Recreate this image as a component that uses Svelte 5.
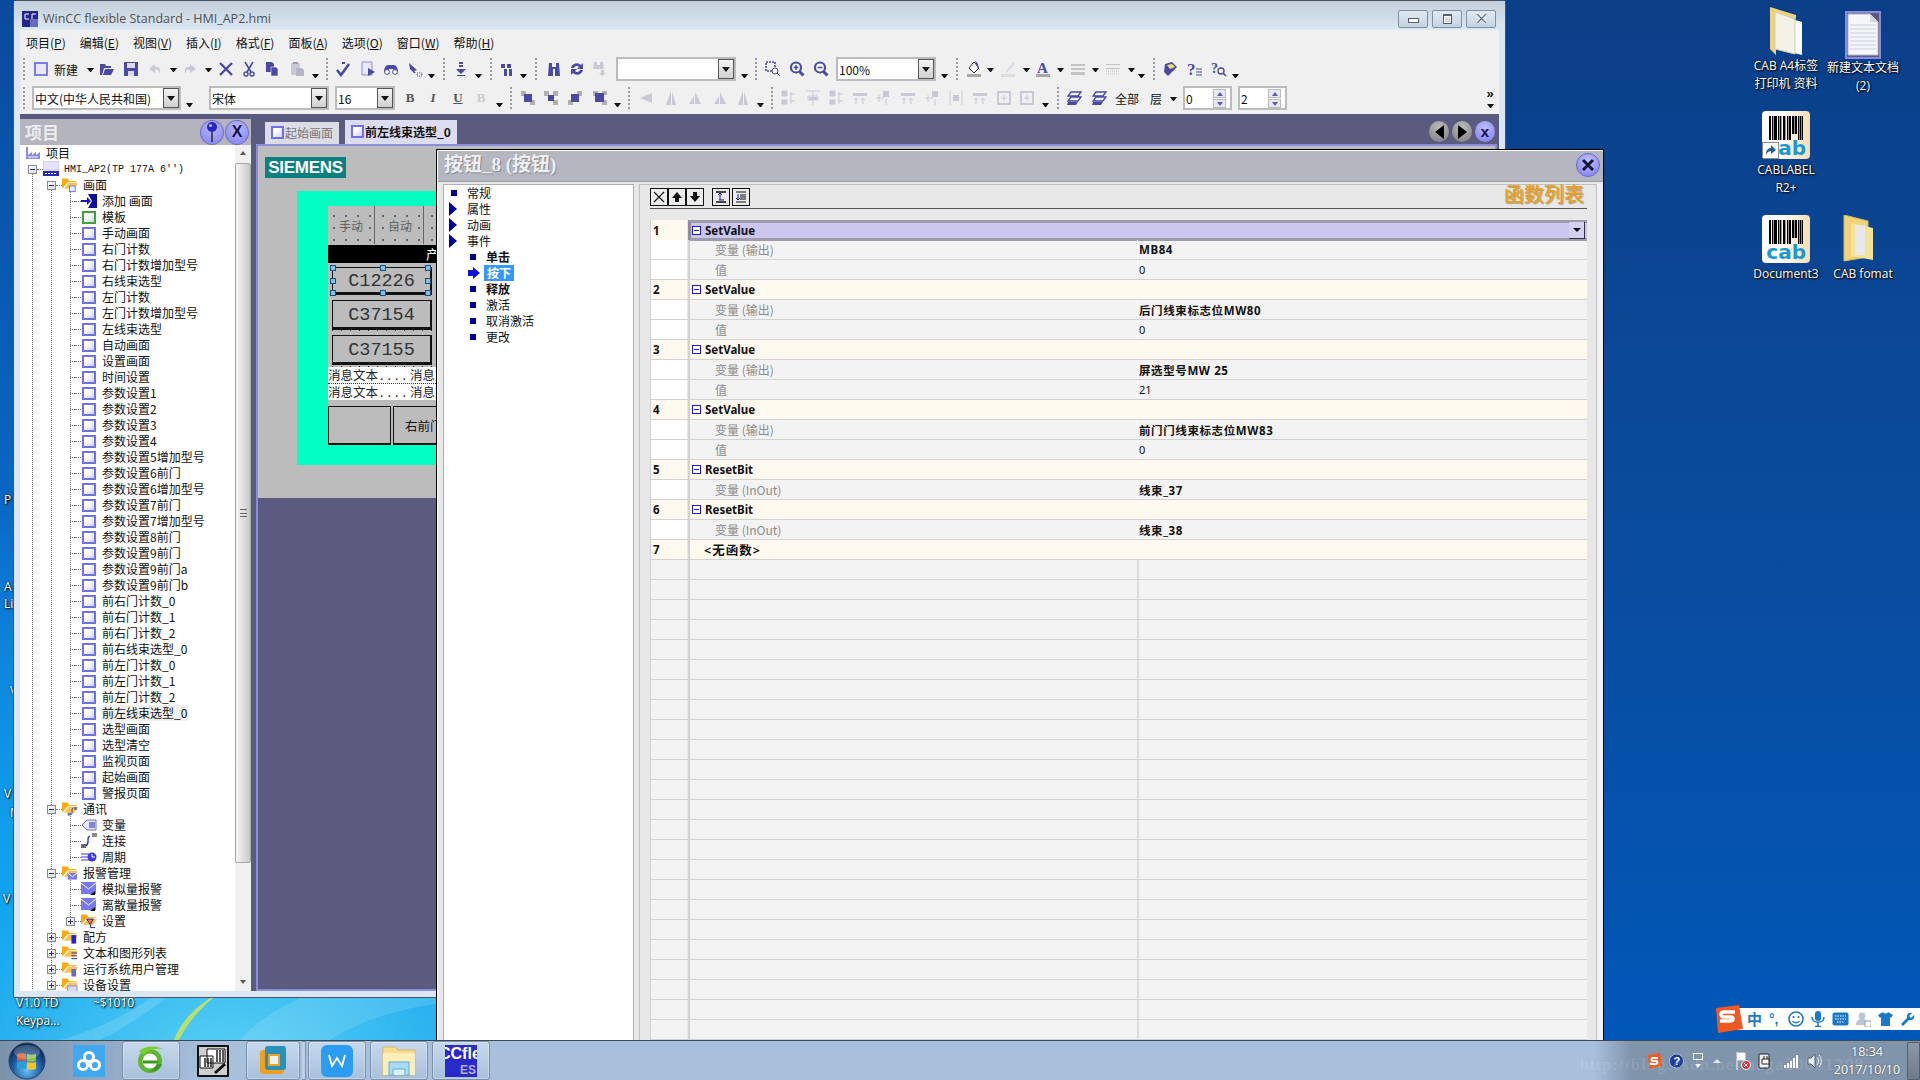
<script>
	const B = '#4a4aa6';
	const G = '#c9c9d6';
	const icons = {
		new: `<rect x="2" y="2" width="12" height="12" fill="#e8e8ff" stroke="#7c7cf0" stroke-width="2"/>`,
		open: `<path d="M1 14V3h5l1 2h5v2H5l-2 7zM4 14l2-6h9l-3 6z" fill="${B}"/>`,
		save: `<path d="M1 1h14v14H1z" fill="${B}"/><path d="M4 2h8v5H4z" fill="#dcdcf0"/><path d="M5 10h6v5H5z" fill="#dcdcf0"/>`,
		undo: `<path d="M12 13c3-4 0-8-4-7V3L2 8l6 4V9c3-1 5 1 4 4z" fill="${G}"/>`,
		redo: `<path d="M4 13C1 9 4 5 8 6V3l6 5-6 4V9c-3-1-5 1-4 4z" fill="${G}"/>`,
		del: `<path d="M2 2l12 12M14 2L2 14" stroke="${B}" stroke-width="2.4"/>`,
		cut: `<path d="M4 1l6 10M12 1L6 11" stroke="${B}" stroke-width="1.6"/><circle cx="5" cy="13" r="2" fill="none" stroke="${B}" stroke-width="1.4"/><circle cx="11" cy="13" r="2" fill="none" stroke="${B}" stroke-width="1.4"/>`,
		copy: `<path d="M2 1h6l2 2v8H2z" fill="${B}"/><path d="M7 6h5l2 2v7H7z" fill="${B}" stroke="#f0f0f0" stroke-width=".6"/>`,
		paste: `<path d="M2 2h9v12H2z" fill="${G}"/><path d="M7 7h6l2 2v6H7z" fill="#b4b4c6"/><path d="M4 1h5v2H4z" fill="#9c9cb0"/>`,
		check: `<path d="M2 9l4 5 8-11" fill="none" stroke="${B}" stroke-width="2.6"/><path d="M7 1h3v2H7z" fill="${B}"/>`,
		run: `<path d="M2 1h10v13H2z" fill="#e8e8f4" stroke="#8c8cc8"/><path d="M8 7l7 4-7 4z" fill="${B}"/>`,
		glasses: `<path d="M1 11c0-4 2-7 4-7h6c2 0 4 3 4 7h-5V8H6v3z" fill="${B}"/><circle cx="4" cy="11" r="2.4" fill="#fff" stroke="${B}"/><circle cx="12" cy="11" r="2.4" fill="#fff" stroke="${B}"/>`,
		xref: `<path d="M2 2l8 7-3 1 2 2H7L3 8z" fill="${B}"/><path d="M10 12h5v3h-5z" fill="none" stroke="${B}" stroke-dasharray="1 1"/>`,
		down: `<path d="M6 1h4v2H6zM6 4h4v2H6zM3 8h10l-5 5zM4 14h8v1H4z" fill="${B}"/>`,
		stack: `<path d="M1 3h4v4H1zM7 3h4v4H7zM4 8h3v7H4zM9 8h3v7H9z" fill="${B}"/>`,
		bino: `<path d="M3 2h3v4h4V2h3l1 13H9V8H7v7H2z" fill="${B}"/>`,
		replace: `<path d="M2 7a6 6 0 0 1 10-3l2-2v6H8l2-2a3 3 0 0 0-5 1zM14 9a6 6 0 0 1-10 3l-2 2V8h6l-2 2a3 3 0 0 0 5-1z" fill="${B}"/>`,
		findd: `<path d="M2 1h3v3h3V1h3l1 7H1zM9 9v3H7l3 3 4-3h-2V9z" fill="${G}"/>`,
		zrect: `<path d="M1 1h9v9H1z" fill="none" stroke="${B}" stroke-dasharray="2 1" stroke-width="1.6"/><circle cx="10" cy="10" r="3" fill="#fff" stroke="${B}"/><path d="M12 12l3 3" stroke="${B}"/>`,
		zin: `<circle cx="7" cy="6.5" r="5" fill="#fff" stroke="${B}" stroke-width="2.2"/><path d="M4.5 6.5h5M7 4v5" stroke="${B}" stroke-width="1.6"/><path d="M10.5 10.5l4 4" stroke="${B}" stroke-width="3"/>`,
		zout: `<circle cx="7" cy="6.5" r="5" fill="#fff" stroke="${B}" stroke-width="2.2"/><path d="M4.5 6.5h5" stroke="${B}" stroke-width="1.6"/><path d="M10.5 10.5l4 4" stroke="${B}" stroke-width="3"/>`,
		fill: `<path d="M8 1l5 6-5 5-5-5z" fill="#fff" stroke="#333"/><path d="M9 0c3 1 4 5 3 8-1-2-2-5-3-8z" fill="${B}"/><path d="M1 13h14v3H1z" fill="#a8a8a8"/>`,
		pen: `<path d="M13 1L7 9l-2 3 3-1 7-8z" fill="#dcdce6"/><path d="M1 13h14v3H1z" fill="#dcdcdc"/>`,
		fontA: `<text x="2" y="12" font-family="Liberation Serif,serif" font-size="15" font-weight="bold" fill="${B}">A</text><path d="M1 13h14v3H1z" fill="#a8a8a8"/>`,
		lines: `<path d="M1 3h14v2H1zM1 7h14v2H1zM1 11h14v3H1z" fill="#c4c4c4"/>`,
		dash: `<path d="M1 3h14v1H1zM1 7h14v1H1z" fill="#c4c4c4"/><path d="M1 10h14M1 13h14" stroke="#c4c4c4" stroke-dasharray="1 1"/>`,
		book: `<path d="M3 3l7-2 5 5-9 9-4-4z" fill="${B}"/><path d="M5 4l5-1 3 3-5 2z" fill="#ece078"/>`,
		help: `<text x="0" y="14" font-family="Liberation Serif,serif" font-size="17" font-weight="bold" fill="${B}">?</text><path d="M9 8h6M9 11h6M9 14h6" stroke="${B}"/>`,
		helpz: `<text x="0" y="12" font-family="Liberation Serif,serif" font-size="14" font-weight="bold" fill="${B}">?</text><circle cx="10" cy="10" r="3" fill="#fff" stroke="${B}" stroke-width="1.4"/><path d="M12 12l3 3" stroke="${B}" stroke-width="1.6"/>`,
		o1: `<path d="M1 1h5v5H1zM10 10h5v5h-5z" fill="#b0b0b0"/><path d="M4 4h8v8H4z" fill="${B}"/>`,
		o2: `<path d="M1 1h5v5H1zM10 10h5v5h-5zM10 1h5v5h-5z" fill="#b0b0b0"/><path d="M5 5h6v6H5z" fill="${B}"/>`,
		o3: `<path d="M10 1h5v5h-5zM1 10h5v5H1z" fill="#b0b0b0"/><path d="M4 4h8v8H4z" fill="${B}"/>`,
		o4: `<path d="M10 10h5v5h-5zM1 1h5v5H1zM10 1h5v4h-5z" fill="#b0b0b0"/><path d="M3 3h9v9H3z" fill="${B}"/>`,
		f1: `<path d="M14 3v10L2 8z" fill="${G}"/>`,
		f2: `<path d="M8 1v14H3zM9 1l4 14H9z" fill="${G}"/>`,
		f3: `<path d="M8 2l6 12H8zM7 6L2 14h5z" fill="${G}"/>`,
		a1: `<path d="M2 1h5v5H2zM2 10h5v4H2zM11 2v12" stroke="${G}" fill="${G}"/><path d="M10 4h5M10 11h5" stroke="${G}"/>`,
		a2: `<path d="M1 1h14M8 1v14M3 6h10v4H3z" stroke="${G}" fill="none"/><path d="M4 7h8v3H4z" fill="${G}"/>`,
		a3: `<path d="M1 3h14v3H1z" fill="${G}"/><path d="M4 8v6M11 8v6M2 10l2-2 2 2M9 10l2-2 2 2" stroke="${G}" fill="none"/>`,
		a4: `<path d="M8 1h6v6H8z" fill="${G}"/><path d="M1 8h8M4 5v7M11 9v6" stroke="${G}" fill="none"/>`,
		a5: `<path d="M2 1v14M14 1v14" stroke="${G}"/><path d="M5 5h6v6H5z" fill="${G}"/>`,
		a6: `<rect x="2" y="2" width="12" height="12" fill="none" stroke="${G}" stroke-width="2"/><path d="M5 8h6M8 5v6" stroke="${G}"/>`,
		l1: `<path d="M5 2h10l-3 4H2zM5 7h10l-3 4H2z" fill="none" stroke="${B}" stroke-width="1.3"/><path d="M2 12h10l-2 3H1z" fill="${B}"/>`
	};

	// toolbar entries carry the x they have on screen; margins follow from it
	function place(items, w) {
		let end = 20;
		return items.map((it) => {
			const width = w(it);
			const m = it.x - end;
			end = it.x + width;
			return { ...it, m, width };
		});
	}
	const widthOf = (it) => it.w ?? (it.k === 'grip' ? 4 : it.k === 'arr' || it.k === 'more' ? 7 : 16);
	const ic = (x, i) => ({ k: 'icon', x, i });
	const bar1 = place([
		{ k: 'grip', x: 23 }, ic(33, 'new'), { k: 'label', x: 54, w: 24, t: '新建' }, { k: 'arr', x: 87 }, ic(99, 'open'), ic(123, 'save'),
		ic(147, 'undo'), { k: 'arr', x: 170 }, ic(182, 'redo'), { k: 'arr', x: 205 }, ic(218, 'del'), ic(241, 'cut'), ic(264, 'copy'), ic(289, 'paste'),
		{ k: 'more', x: 312 }, { k: 'grip', x: 326 }, ic(335, 'check'), ic(360, 'run'), ic(383, 'glasses'), ic(407, 'xref'), { k: 'more', x: 428 },
		{ k: 'grip', x: 443 }, ic(453, 'down'), { k: 'more', x: 475 }, { k: 'grip', x: 490 }, ic(500, 'stack'), { k: 'more', x: 520 }, { k: 'grip', x: 535 },
		ic(546, 'bino'), ic(569, 'replace'), ic(592, 'findd'), { k: 'combo', x: 616, w: 120, t: '' }, { k: 'more', x: 741 }, { k: 'grip', x: 755 },
		ic(765, 'zrect'), ic(789, 'zin'), ic(813, 'zout'), { k: 'combo', x: 836, w: 100, t: '100%' }, { k: 'more', x: 941 }, { k: 'grip', x: 956 },
		ic(966, 'fill'), { k: 'arr', x: 987 }, ic(1000, 'pen'), { k: 'arr', x: 1023 }, ic(1035, 'fontA'), { k: 'arr', x: 1057 }, ic(1070, 'lines'), { k: 'arr', x: 1092 },
		ic(1105, 'dash'), { k: 'arr', x: 1128 }, { k: 'more', x: 1138 }, { k: 'grip', x: 1153 }, ic(1162, 'book'), ic(1187, 'help'), ic(1211, 'helpz'), { k: 'more', x: 1232 }
	], widthOf);
	const bar2 = place([
		{ k: 'grip', x: 23 }, { k: 'combo', x: 32, w: 149, t: '中文(中华人民共和国)' }, { k: 'more', x: 186 },
		{ k: 'combo', x: 209, w: 120, t: '宋体' }, { k: 'combo', x: 335, w: 60, t: '16' },
		{ k: 'fmt', x: 402, w: 16, t: 'B', c: 'b' }, { k: 'fmt', x: 425, w: 16, t: 'I', c: 'i' }, { k: 'fmt', x: 450, w: 16, t: 'U', c: 'u' }, { k: 'fmt', x: 473, w: 16, t: 'B', c: 'b off' }, { k: 'more', x: 496 },
		{ k: 'grip', x: 510 }, ic(520, 'o1'), ic(543, 'o2'), ic(567, 'o3'), ic(592, 'o4'), { k: 'more', x: 614 }, { k: 'grip', x: 628 },
		ic(638, 'f1'), ic(663, 'f2'), ic(687, 'f3'), ic(712, 'f3'), ic(735, 'f2'), { k: 'more', x: 757 }, { k: 'grip', x: 771 },
		ic(780, 'a1'), ic(805, 'a2'), ic(828, 'a1'), ic(852, 'a3'), ic(875, 'a4'), ic(900, 'a3'), ic(924, 'a4'), ic(948, 'a5'), ic(972, 'a3'), ic(996, 'a6'), ic(1019, 'a6'),
		{ k: 'more', x: 1042 }, { k: 'grip', x: 1057 }, ic(1066, 'l1'), ic(1091, 'l1'), { k: 'label', x: 1115, w: 24, t: '全部' }, { k: 'label', x: 1150, w: 12, t: '层' },
		{ k: 'arr', x: 1170 }, { k: 'spin', x: 1183, w: 49, t: '0' }, { k: 'spin', x: 1238, w: 49, t: '2' }, { k: 'chev', x: 1485, w: 10 }
	], widthOf);

	const menu = [['项目', 'P'], ['编辑', 'E'], ['视图', 'V'], ['插入', 'I'], ['格式', 'F'], ['面板', 'A'], ['选项', 'O'], ['窗口', 'W'], ['帮助', 'H']];

	const scr = (t) => ({ t, l: 3, i: 'screen' });
	const tree = [
		{ t: '项目', l: 0, i: 'factory' },
		{ t: "HMI_AP2(TP 177A 6'')", l: 1, i: 'hmi', ex: '-', mono: true },
		{ t: '画面', l: 2, i: 'folder', ex: '-', sub: 'scr' },
		{ t: '添加 画面', l: 3, i: 'add' },
		{ t: '模板', l: 3, i: 'tpl' },
		...['手动画面', '右门计数', '右门计数增加型号', '右线束选型', '左门计数', '左门计数增加型号', '左线束选型', '自动画面', '设置画面', '时间设置',
			'参数设置1', '参数设置2', '参数设置3', '参数设置4', '参数设置5增加型号', '参数设置6前门', '参数设置6增加型号', '参数设置7前门', '参数设置7增加型号',
			'参数设置8前门', '参数设置9前门', '参数设置9前门a', '参数设置9前门b', '前右门计数_0', '前右门计数_1', '前右门计数_2', '前右线束选型_0',
			'前左门计数_0', '前左门计数_1', '前左门计数_2'].map(scr),
		{ ...scr('前左线束选型_0'), sel: true },
		...['选型画面', '选型清空', '监视页面', '起始画面', '警报页面'].map(scr),
		{ t: '通讯', l: 2, i: 'folder', ex: '-', sub: 'link' },
		{ t: '变量', l: 3, i: 'tag' },
		{ t: '连接', l: 3, i: 'link' },
		{ t: '周期', l: 3, i: 'cycle' },
		{ t: '报警管理', l: 2, i: 'folder', ex: '-', sub: 'mail' },
		{ t: '模拟量报警', l: 3, i: 'mail' },
		{ t: '离散量报警', l: 3, i: 'mail' },
		{ t: '设置', l: 3, i: 'folder', ex: '+', sub: 'set' },
		{ t: '配方', l: 2, i: 'folder', ex: '+', sub: 'rec' },
		{ t: '文本和图形列表', l: 2, i: 'folder', ex: '+', sub: 'list' },
		{ t: '运行系统用户管理', l: 2, i: 'folder', ex: '+', sub: 'user' },
		{ t: '设备设置', l: 2, i: 'folder', ex: '+', sub: 'dev' }
	];
	const guides = [
		{ x: 11, a: 1, b: 52 }, { x: 30, a: 2, b: 52 }, { x: 49, a: 2, b: 40 }, { x: 49, a: 41, b: 44 }, { x: 49, a: 45, b: 48 }
	];

	const events = [
		{ t: '常规', l: 0, m: 'sq' }, { t: '属性', l: 0, m: 'tri' }, { t: '动画', l: 0, m: 'tri' }, { t: '事件', l: 0, m: 'tri' },
		{ t: '单击', l: 1, m: 'sq', b: true }, { t: '按下', l: 1, m: 'arrow', b: true, on: true }, { t: '释放', l: 1, m: 'sq', b: true },
		{ t: '激活', l: 1, m: 'sq' }, { t: '取消激活', l: 1, m: 'sq' }, { t: '更改', l: 1, m: 'sq' }
	];

	const fns = [
		{ n: 1, f: 'SetValue', sel: true, sub: [['变量 (输出)', 'MB84', 1], ['值', '0']] },
		{ n: 2, f: 'SetValue', sub: [['变量 (输出)', '后门线束标志位MW80', 1], ['值', '0']] },
		{ n: 3, f: 'SetValue', sub: [['变量 (输出)', '屏选型号MW 25', 1], ['值', '21']] },
		{ n: 4, f: 'SetValue', sub: [['变量 (输出)', '前门门线束标志位MW83', 1], ['值', '0']] },
		{ n: 5, f: 'ResetBit', sub: [['变量 (InOut)', '线束_37', 1]] },
		{ n: 6, f: 'ResetBit', sub: [['变量 (InOut)', '线束_38', 1]] }
	];
	const blanks = Array.from({ length: 24 }, (_, i) => i);
	const codes = [{ c: 'C12226', sel: true }, { c: 'C37154' }, { c: 'C37155' }];
	const bars = [0, 3, 5, 6, 9, 11, 14, 15, 18, 20, 23, 24, 26, 29, 31, 33];
</script>

{#snippet svg(name, w = 16)}
	<svg width={w} height={w} viewBox="0 0 16 16">{@html icons[name]}</svg>
{/snippet}

{#snippet folderIcon(sub)}
	<svg width="17" height="16" viewBox="0 0 17 16">
		<path d="M0 1h6l2 3h8l-1 1H6L1 11H0z" fill="#fca90f" />
		<path d="M2 12l5-6h10l-4 6z" fill="#fdc24a" />
		{#if sub === 'scr'}<rect x="8" y="9" width="6" height="6" fill="#eef" stroke="#6c6cf0" />{/if}
		{#if sub === 'link'}<path d="M12 7c-3 1 0 4-2 7" fill="none" stroke="#1a1ae0" /><rect x="13" y="6" width="3" height="3" fill="#5a7a90" /><rect x="6" y="12" width="3" height="3" fill="#5a7a90" />{/if}
		{#if sub === 'mail'}<rect x="6" y="8" width="10" height="7" fill="#7a7af0" /><path d="M6 8l5 4 5-4" fill="none" stroke="#fff" />{/if}
		{#if sub === 'set'}<path d="M6 6h7l-3 6z" fill="#f08010" stroke="#2020a0" /><path d="M10 12v3h5" fill="none" stroke="#2020a0" />{/if}
		{#if sub === 'rec'}<rect x="10" y="6" width="5" height="9" fill="#2020e0" />{/if}
		{#if sub === 'list'}<path d="M10 8h6M10 11h6M10 14h6" stroke="#2020a0" />{/if}
		{#if sub === 'user'}<circle cx="12" cy="6" r="2" fill="#e8c090" /><rect x="10" y="8" width="5" height="8" fill="#6a6ac0" />{/if}
		{#if sub === 'dev'}<rect x="6" y="9" width="10" height="7" fill="#d8d8f8" stroke="#8888e0" />{/if}
	</svg>
{/snippet}

{#snippet treeIcon(r)}
	{#if r.i === 'screen'}<span class="scr"></span>
	{:else if r.i === 'tpl'}<span class="scr tpl"></span>
	{:else if r.i === 'folder'}{@render folderIcon(r.sub)}
	{:else if r.i === 'factory'}
		<svg width="16" height="14" viewBox="0 0 16 14"><path d="M1 1v12h14V6l-4 3V6L7 9V6L3 9V1z" fill="#8a8af0" /><path d="M3 11h10" stroke="#fff" /></svg>
	{:else if r.i === 'hmi'}
		<svg width="16" height="16" viewBox="0 0 16 16"><rect y="0" width="16" height="9" fill="#e4e4fa" stroke="#c0c0f0" /><rect y="10" width="16" height="5" fill="#2828b8" /><path d="M2 12.5h12" stroke="#fff" stroke-dasharray="2 1" /></svg>
	{:else if r.i === 'add'}
		<svg width="16" height="14" viewBox="0 0 16 14"><path d="M7 0h9v14H7l4-7z" fill="#0c0ca0" /><path d="M0 6h6V3l4 4-4 4V8H0z" fill="#1414d0" /></svg>
	{:else if r.i === 'tag'}
		<svg width="16" height="12" viewBox="0 0 16 12"><path d="M1 6l5-5h9v10H6z" fill="#e8e8fa" stroke="#6a6ae0" /><path d="M8 4h6M8 6h6M8 8h6" stroke="#2020b0" /></svg>
	{:else if r.i === 'link'}
		<svg width="16" height="16" viewBox="0 0 16 16"><path d="M9 3C4 5 10 9 5 13" fill="none" stroke="#1a1ae0" stroke-width="1.2" /><rect x="11" y="0" width="5" height="4" fill="#8a8a8a" /><rect x="0" y="11" width="5" height="4" fill="#6a6a6a" /></svg>
	{:else if r.i === 'cycle'}
		<svg width="16" height="10" viewBox="0 0 16 10"><path d="M0 2h8M0 5h8M0 8h8" stroke="#3a3ae0" /><circle cx="11" cy="5" r="4.5" fill="#3a3ae0" /><path d="M11 2v3h3" fill="none" stroke="#fff" /></svg>
	{:else if r.i === 'mail'}
		<svg width="16" height="14" viewBox="0 0 16 14"><rect width="15" height="12" fill="#7878ee" /><path d="M0 1l7.5 6L15 1" fill="none" stroke="#fff" /><path d="M9 13l5-4v4z" fill="#111" /></svg>
	{/if}
{/snippet}

{#snippet minus()}
	<svg class="fx" width="9" height="9" viewBox="0 0 9 9"><rect x=".5" y=".5" width="8" height="8" fill="#fff" stroke="#1818e0" /><path d="M2 4.5h5" stroke="#1818e0" /></svg>
{/snippet}

{#snippet cabIcon(word, shortcut)}
	<div class="cab">
		<svg class="cabbars" width="34" height="26" viewBox="0 0 34 26">
			{#each bars as b, i}<rect x={b} y="0" width={i % 3 === 0 ? 2 : 1.4} height={i > 9 && i < 13 ? 18 : 24} />{/each}
		</svg>
		<span class="cabword">{word}</span>
		{#if shortcut}
			<span class="shortcut">
				<svg width="14" height="14" viewBox="0 0 14 14"><path d="M3 12c0-5 2-7 5-7V2l5 5-5 4V8c-2 0-4 1-5 4z" fill="#1a5ea8" /></svg>
			</span>
		{/if}
	</div>
{/snippet}

<div class="desktop">
	<!-- half-hidden desktop labels behind the window -->
	<span class="peek" style="left:4px;top:491px">P</span>
	<span class="peek" style="left:4px;top:578px">A</span>
	<span class="peek" style="left:4px;top:595px">Li</span>
	<span class="peek" style="left:10px;top:682px">V</span>
	<span class="peek" style="left:4px;top:785px">V</span>
	<span class="peek" style="left:10px;top:804px">M</span>
	<span class="peek" style="left:3px;top:890px">V</span>
	<span class="peek" style="left:16px;top:994px">V1.0 TD</span>
	<span class="peek" style="left:93px;top:994px">~$1010</span>
	<span class="peek" style="left:16px;top:1012px">Keypa...</span>

	<svg class="swoosh" width="436" height="42" viewBox="0 0 436 42">
		<path d="M210 0c-20 14-30 26-36 42h5c8-16 18-28 34-42z" fill="#b8e070" />
		<path d="M150 0C130 16 90 34 60 42h40c20-10 50-28 65-42z" fill="#fff" opacity=".14" />
		<path d="M300 0c-30 14-50 30-60 42h90c20-14 60-30 106-36V0z" fill="#fff" opacity=".12" />
	</svg>

	<div class="dicon" style="left:1752px;top:0">
		<svg class="tall" width="36" height="50" viewBox="0 0 36 50"><path d="M2 0l26 8v4L8 6v42L2 42z" fill="#efd27a" /><path d="M10 8l24 7v33L10 42z" fill="#fff" /><path d="M7 5l20 7v35L7 42z" fill="#f4f1e6" stroke="#d8cfa8" /></svg>
		<div class="dlabel">CAB A4标签<br />打印机 资料</div>
	</div>
	<div class="dicon" style="left:1829px;top:0">
		<svg class="doc" width="32" height="44" viewBox="0 0 32 44"><path d="M1 1h22l8 8v33H1z" fill="#f4f6fa" stroke="#b8bcc6" /><path d="M3 12h26M3 16h26M3 20h26M3 24h26M3 28h26M3 32h26M3 36h26" stroke="#c8d0e0" /><path d="M23 1v8h8z" fill="#d4d8e0" /></svg>
		<div class="dlabel">新建文本文档<br />(2)</div>
	</div>
	<div class="dicon" style="left:1752px;top:111px">
		{@render cabIcon('ab', true)}
		<div class="dlabel gap3">CABLABEL<br />R2+</div>
	</div>
	<div class="dicon" style="left:1752px;top:215px">
		{@render cabIcon('cab', false)}
		<div class="dlabel gap3">Document3</div>
	</div>
	<div class="dicon" style="left:1829px;top:215px">
		<svg class="fomat" width="32" height="48" viewBox="0 0 32 48"><path d="M1 0l24 6v36L1 46z" fill="#efd27a" stroke="#d8b858" /><path d="M8 8l22 5v32L8 41z" fill="#f2e29c" /><path d="M12 10h10v30H12z" fill="#e8e8e8" /></svg>
		<div class="dlabel gap3">CAB fomat</div>
	</div>

	<div class="window">
		<header class="titlebar">
			<svg class="appicon" width="16" height="16" viewBox="0 0 16 16"><rect width="16" height="16" fill="#23238c" /><rect x="8" y="8" width="8" height="8" fill="#6a6ac0" /><path d="M3 3h4M3 3v5M3 8h4M10 3h4M10 3v5" stroke="#fff" fill="none" /></svg>
			<span class="apptitle">WinCC flexible Standard - HMI_AP2.hmi</span>
			<div class="winbtns">
				<span class="wb"><i class="w-min"></i></span>
				<span class="wb"><i class="w-max"></i></span>
				<span class="wb">
					<svg width="13" height="11" viewBox="0 0 13 11"><path d="M2 1l9 9M11 1l-9 9" stroke="#fff" stroke-width="3" /><path d="M2 1l9 9M11 1l-9 9" stroke="#64748a" stroke-width="1.4" /></svg>
				</span>
			</div>
		</header>

		<nav class="menubar">
			{#each menu as [a, k]}<span class="mi">{a}(<u>{k}</u>)</span>{/each}
		</nav>

		{#each [bar1, bar2] as bar, bi}
			<div class="toolbar" class:second={bi === 1}>
				{#each bar as it}
					{#if it.k === 'grip'}<span class="grip" style="margin-left:{it.m}px"></span>
					{:else if it.k === 'arr'}<span class="arr" style="margin-left:{it.m}px"></span>
					{:else if it.k === 'more'}<span class="arr more" style="margin-left:{it.m}px"></span>
					{:else if it.k === 'icon'}<span class="tic" style="margin-left:{it.m}px">{@render svg(it.i)}</span>
					{:else if it.k === 'label'}<span class="tlabel" style="margin-left:{it.m}px;width:{it.width}px">{it.t}</span>
					{:else if it.k === 'fmt'}<span class="fmt {it.c}" style="margin-left:{it.m}px">{it.t}</span>
					{:else if it.k === 'combo'}
						<span class="combo" style="margin-left:{it.m}px;width:{it.width}px"><span class="ctext">{it.t}</span><span class="cbtn"><i></i></span></span>
					{:else if it.k === 'spin'}
						<span class="spin" style="margin-left:{it.m}px;width:{it.width}px"><span class="ctext">{it.t}</span><span class="spbtns"><i class="up"></i><i class="dn"></i></span></span>
					{:else if it.k === 'chev'}
						<span class="chev" style="margin-left:{it.m}px">»<span class="arr"></span></span>
					{/if}
				{/each}
			</div>
		{/each}

		<div class="workspace">
			<aside class="project">
				<div class="panehead">
					<span>项目</span>
					<span class="pbtn"><svg width="12" height="22" viewBox="0 0 12 22"><circle cx="6" cy="6" r="5" fill="#2424c8" /><circle cx="4.5" cy="4.5" r="1.6" fill="#b8b8ff" /><path d="M6 11v10" stroke="#222" stroke-width="1.4" /></svg></span>
					<span class="pbtn x"><b>X</b></span>
				</div>
				<div class="panebody">
					<div class="tree">
						{#each guides as g}
							<i class="vline" style="left:{g.x}px;top:{g.a * 16 + 12}px;height:{(g.b - g.a) * 16}px"></i>
						{/each}
						{#each tree as r}
							<div class="row" style="padding-left:{r.l === 0 ? 4 : 19 * r.l - 12}px">
								{#if r.l > 0}
									{#if r.ex}
										<span class="exp">{#if r.ex === '-'}<i class="h"></i>{:else}<i class="h"></i><i class="v"></i>{/if}</span>
									{:else}
										<span class="noexp"></span>
									{/if}
									<span class="stub"></span>
								{/if}
								<span class="ri">{@render treeIcon(r)}</span>
								<span class="rt" class:mono={r.mono} class:sel={r.sel}>{r.t}</span>
							</div>
						{/each}
					</div>
					<div class="vscroll">
						<i class="sup"></i>
						<div class="thumb"><span></span></div>
						<i class="sdn"></i>
					</div>
				</div>
			</aside>

			<section class="editor">
				<div class="tabs">
					<span class="tab"><i class="scr small"></i>起始画面</span>
					<span class="tab active"><i class="scr small"></i>前左线束选型_0</span>
					<div class="navbtns">
						<span class="nav"><i class="tl"></i></span>
						<span class="nav"><i class="tr"></i></span>
						<span class="nav close"><b>x</b></span>
					</div>
				</div>
				<div class="doc">
					<div class="canvas">
						<div class="siemens">SIEMENS</div>
						<div class="screen">
							<div class="hmi">
								<div class="hrow">
									<span class="hbtn">手动</span>
									<span class="hbtn">自动</span>
									<span class="hbtn"></span>
								</div>
								<div class="hblack"><span>产</span></div>
								<div class="codes">
									{#each codes as c}
										<div class="code" class:picked={c.sel}>
											{c.c}
											{#if c.sel}
												<i class="hd" style="left:-3px;top:-3px"></i><i class="hd" style="left:47px;top:-3px"></i><i class="hd" style="left:92px;top:-3px"></i>
												<i class="hd" style="left:-3px;top:10px"></i><i class="hd" style="left:92px;top:10px"></i>
												<i class="hd" style="left:-3px;top:22px"></i><i class="hd" style="left:47px;top:22px"></i><i class="hd" style="left:92px;top:22px"></i>
											{/if}
										</div>
									{/each}
								</div>
								<div class="msg">消息文本<span class="dots">....</span>消息文本</div>
								<div class="msg last">消息文本<span class="dots">....</span>消息文本</div>
								<div class="hbottom">
									<span class="bbtn"></span>
									<span class="bbtn long">右前门</span>
								</div>
							</div>
						</div>
					</div>
				</div>
			</section>
		</div>
	</div>

	<div class="dialog">
		<div class="dhead">
			<span class="dtitle">按钮_8 (按钮)</span>
			<span class="dclose">
				<svg width="14" height="14" viewBox="0 0 14 14"><path d="M2 2l10 10M12 2L2 12" stroke="#14143c" stroke-width="3" /></svg>
			</span>
		</div>
		<div class="dbody">
			<div class="evtree">
				{#each events as e}
					<div class="ev" class:lvl1={e.l === 1}>
						<span class="mark">
							{#if e.m === 'sq'}<i class="sq"></i>
							{:else if e.m === 'tri'}<i class="tri"></i>
							{:else}<svg width="12" height="12" viewBox="0 0 12 12"><path d="M0 3h5V0l7 6-7 6V9H0z" fill="#1010e0" /></svg>{/if}
						</span>
						<span class="evt" class:bold={e.b} class:on={e.on}>{e.t}</span>
					</div>
				{/each}
			</div>
			<div class="fnpanel">
				<div class="fnbar">
					<div class="fngroup">
						<span class="fb"><svg width="14" height="14" viewBox="0 0 14 14"><path d="M2 2l10 10M12 2L2 12" stroke="#111" stroke-width="1.2" /></svg></span>
						<span class="fb"><svg width="14" height="14" viewBox="0 0 14 14"><path d="M7 2l5 6H9v4H5V8H2z" fill="#111" /></svg></span>
						<span class="fb"><svg width="14" height="14" viewBox="0 0 14 14"><path d="M7 12L2 6h3V2h4v4h3z" fill="#111" /></svg></span>
					</div>
					<div class="fngroup two">
						<span class="fb"><svg width="14" height="14" viewBox="0 0 14 14"><path d="M2 2h10M2 12h10" stroke="#111" stroke-width="1.6" /><path d="M6 3v7M4 5l2-2 2 2M5 10h5" stroke="#1414a0" fill="none" /></svg></span>
						<span class="fb"><svg width="14" height="14" viewBox="0 0 14 14"><path d="M2 2h10M6 5h6M6 7h6M6 9h6M2 12h10" stroke="#111" stroke-width="1.2" /><path d="M4 4v6M2 8l2 2 2-2" stroke="#1414a0" fill="none" /></svg></span>
					</div>
					<span class="fntitle">函数列表</span>
				</div>
				<div class="fntable">
					{#each fns as f}
						<div class="trow head" class:selected={f.sel}>
							<span class="num">{f.n}</span>
							<span class="fname">{@render minus()}<b>{f.f}</b></span>
							<span class="fval">
								{#if f.sel}<span class="dd"><i></i></span>{/if}
							</span>
						</div>
						{#each f.sub as [label, value, strong]}
							<div class="trow sub">
								<span class="num"></span>
								<span class="plabel">{label}</span>
								<span class="pval" class:strong>{value}</span>
							</div>
						{/each}
					{/each}
					<div class="trow head">
						<span class="num">7</span>
						<span class="fname none"><b>&lt;无函数&gt;</b></span>
						<span class="fval"></span>
					</div>
					{#each blanks as b (b)}
						<div class="trow blank"><span class="num"></span><span></span><span class="pval"></span></div>
					{/each}
				</div>
			</div>
		</div>
	</div>

	<div class="imebar">
		<svg class="imelogo" width="30" height="28" viewBox="0 0 30 28"><path d="M3 3l23-3 4 24-25 4z" fill="#f05a22" /><path d="M22 7H11c-4 0-4 5 0 5h7c3 0 3 4-1 4H7" fill="none" stroke="#fff" stroke-width="3.4" /></svg>
		<span class="imez">中</span>
		<span class="imep">°,</span>
		<svg width="16" height="16" viewBox="0 0 16 16"><circle cx="8" cy="8" r="7" fill="none" stroke="#1a78c8" stroke-width="1.6" /><circle cx="5.5" cy="6" r="1.1" fill="#1a78c8" /><circle cx="10.5" cy="6" r="1.1" fill="#1a78c8" /><path d="M4.5 10c1.5 2.4 5.5 2.4 7 0" fill="none" stroke="#1a78c8" stroke-width="1.4" /></svg>
		<svg width="14" height="16" viewBox="0 0 14 16"><rect x="4" y="0" width="6" height="10" rx="3" fill="#1a78c8" /><path d="M1 6c0 7 12 7 12 0M7 12v3M4 15.5h6" fill="none" stroke="#1a78c8" stroke-width="1.5" /></svg>
		<svg width="17" height="14" viewBox="0 0 17 14"><rect x=".5" y=".5" width="16" height="13" rx="2" fill="#1a78c8" /><path d="M3 4h11M3 7h11M5 10h7" stroke="#fff" stroke-dasharray="1.5 1" /></svg>
		<svg width="15" height="15" viewBox="0 0 15 15"><circle cx="6" cy="4" r="3.4" fill="#b8c8d4" /><path d="M0 13c0-5 3-6 6-6s6 1 6 6z" fill="#b8c8d4" /><rect x="9" y="9" width="6" height="6" fill="#fff" stroke="#90a0b0" /></svg>
		<svg width="15" height="14" viewBox="0 0 15 14"><path d="M5 0L0 3l2 3 1-1v9h9V5l1 1 2-3-5-3c-1 2-4 2-5 0z" fill="#1a78c8" /></svg>
		<svg width="15" height="15" viewBox="0 0 15 15"><path d="M14 3l-3 3-2-2 3-3c-3-1-6 1-5 5L1 12l2 2 6-6c4 1 6-2 5-5z" fill="#1a78c8" /></svg>
	</div>

	<footer class="taskbar">
		<span class="orb">
			<svg width="38" height="38" viewBox="0 0 38 38">
				<defs>
					<radialGradient id="orbg" cx="50%" cy="75%" r="65%"><stop offset="0" stop-color="#6ac4f4" /><stop offset=".6" stop-color="#1c5ea8" /><stop offset="1" stop-color="#0c2c58" /></radialGradient>
				</defs>
				<circle cx="19" cy="19" r="18" fill="url(#orbg)" stroke="#2a4060" />
				<path d="M9 12c3-1 6-1 9 0v7c-3-1-6-1-9 0z" fill="#ec5a28" />
				<path d="M19 12c3 1 6 1 9 0v7c-3 1-6 1-9 0z" fill="#8cc63e" />
				<path d="M9 20c3-1 6-1 9 0v7c-3-1-6-1-9 0z" fill="#2d9cdb" />
				<path d="M19 20c3 1 6 1 9 0v7c-3 1-6 1-9 0z" fill="#fcc21e" />
				<ellipse cx="19" cy="10" rx="13" ry="7" fill="#fff" opacity=".22" />
			</svg>
		</span>
		<span class="pin baidu">
			<svg width="26" height="22" viewBox="0 0 26 22"><circle cx="13" cy="7" r="4.6" fill="none" stroke="#fff" stroke-width="3" /><circle cx="7" cy="15" r="4.6" fill="none" stroke="#fff" stroke-width="3" /><circle cx="19" cy="15" r="4.6" fill="none" stroke="#fff" stroke-width="3" /></svg>
		</span>
		<span class="tbtn ie">
			<svg width="32" height="32" viewBox="0 0 32 32"><circle cx="15" cy="16" r="12" fill="#5cb82e" /><circle cx="15" cy="16" r="7.5" fill="#fff" /><path d="M8 15.5h15v3H8z" fill="#3a9a1e" /><path d="M4 6c8-6 18-5 24-2-6-1-14 0-20 6z" fill="#7ccc30" /><path d="M22 19h5c-2 6-8 9-14 7 4 0 7-3 9-7z" fill="#3a9a1e" /></svg>
		</span>
		<span class="pin hmiapp">
			<svg width="32" height="32" viewBox="0 0 32 32"><rect width="32" height="32" rx="1" fill="#111" /><rect x="2" y="2" width="28" height="28" fill="#cfcfcf" /><path d="M10 4h18v14H10zM3 11h13v12H3z" fill="#fff" stroke="#111" /><path d="M20 5v12M23 5v12M26 5v12M8 13v9M11 13v9M14 13v9" stroke="#111" stroke-width="1.4" /><path d="M18 28l10-9" stroke="#111" stroke-width="3" /></svg>
		</span>
		<span class="tbtn vm">
			<svg width="30" height="32" viewBox="0 0 30 32"><rect x="2" y="5" width="24" height="24" rx="3" fill="#f0a020" /><rect x="7" y="1" width="21" height="24" rx="3" fill="#2a90b8" /><rect x="11" y="10" width="10" height="10" fill="#f0f0f0" stroke="#f0a020" stroke-width="2" /></svg>
		</span>
		<span class="sliver"></span>
		<span class="tbtn wps">
			<span class="wpsbox"><svg width="20" height="14" viewBox="0 0 20 14"><path d="M2 1l3 11 5-8 5 8 3-11" fill="none" stroke="#fff" stroke-width="1.8" /></svg></span>
		</span>
		<span class="tbtn">
			<svg width="34" height="30" viewBox="0 0 34 30"><path d="M1 1h12l3 3h17v25H1z" fill="#f4dc90" stroke="#d8b860" /><path d="M1 7h32v22H1z" fill="#fbeeb8" /><rect x="7" y="16" width="20" height="13" fill="#a8dcf4" stroke="#5ab0d8" /><path d="M11 29v-6h12v6" fill="#d8f0fa" stroke="#5ab0d8" /></svg>
		</span>
		<span class="tbtn">
			<span class="ccfl"><span>CCfle</span><em>ES</em></span>
		</span>

		<span class="watermark">http://blog.csdn.net/aaga20081208</span>
		<div class="tray">
			<svg width="15" height="16" viewBox="0 0 15 16"><path d="M1 2l12-2 2 13-13 3z" fill="#f05a22" /><path d="M11 5H6c-2 0-2 3 0 3h3c2 0 2 3-1 3H3" fill="none" stroke="#fff" stroke-width="2" /></svg>
			<svg class="t-help" width="15" height="16" viewBox="0 0 15 16"><circle cx="7.5" cy="8" r="7" fill="#1c3ca0" stroke="#a8b4c4" /><text x="4.6" y="12" font-size="11" font-weight="bold" font-family="Liberation Sans,sans-serif" fill="#fff">?</text></svg>
			<span class="trayups">
				<i class="rest"></i><i class="dnw"></i>
			</span>
			<i class="upw"></i>
			<svg class="t-flag" width="16" height="18" viewBox="0 0 16 18"><path d="M2 0v18M2 1h8v7H2" fill="#fff" stroke="#eee" /><circle cx="11" cy="13" r="4.5" fill="#e03030" stroke="#fff" /><path d="M9 11l4 4M13 11l-4 4" stroke="#fff" /></svg>
			<svg class="t-plug" width="14" height="16" viewBox="0 0 14 16"><rect x="1" y="1" width="10" height="14" rx="1" fill="#eee" stroke="#222" /><path d="M4 6h7v5H4zM6 3v3M9 3v3" fill="#fff" stroke="#222" /></svg>
			<svg class="t-net" width="16" height="14" viewBox="0 0 16 14"><path d="M1 11h2v3H1zM4 9h2v5H4zM7 7h2v7H7zM10 4h2v10h-2zM13 1h2v13h-2z" fill="#fff" /></svg>
			<svg class="t-vol" width="15" height="16" viewBox="0 0 15 16"><path d="M1 5h3l4-4v14l-4-4H1z" fill="#e8eef4" stroke="#55606c" /><path d="M10 4c2 2 2 6 0 8M12 2c3 3 3 9 0 12" fill="none" stroke="#e8eef4" /></svg>
			<div class="clock"><span>18:34</span><span>2017/10/10</span></div>
			<span class="showdesk"></span>
		</div>
	</footer>
</div>

<style>
	:global(body) {
		margin: 0;
		font-family: "Noto Sans CJK SC", sans-serif;
		font-size: 12px;
		color: #111;
	}
	i {
		font-style: normal;
	}
	.desktop {
		position: relative;
		width: 1920px;
		height: 1080px;
		overflow: hidden;
		background:
			radial-gradient(760px 620px at 230px 1090px, #5fd4f4 0%, #12a4ee 42%, rgba(10, 120, 220, 0) 100%),
			linear-gradient(172deg, #0a4a9c 0%, #0a6ccc 45%, #0a8fe6 85%),
			#0a4a9c;
	}
	.desktop::after {
		content: '';
		position: absolute;
		left: 1506px;
		top: 0;
		right: 0;
		bottom: 0;
		background: linear-gradient(180deg, #0b3f88 0%, #0a4c9e 50%, #0058ba 100%);
	}
	.peek,
	.dlabel {
		font-family: "Open Sans", "Noto Sans CJK SC", sans-serif;
		font-size: 12px;
		line-height: 18px;
		color: #fff;
		text-shadow: 1px 1px 2px #000, 0 0 2px rgba(0, 0, 0, 0.8);
	}
	.peek {
		position: absolute;
	}
	.swoosh {
		position: absolute;
		left: 0;
		top: 998px;
	}
	.dicon {
		position: absolute;
		z-index: 1;
		width: 68px;
		display: flex;
		flex-direction: column;
		align-items: center;
	}
	.tall {
		margin-top: 7px;
	}
	.dicon > .doc {
		margin-top: 11px;
	}
	.fomat {
		margin-right: 8px;
	}
	.dlabel {
		text-align: center;
		white-space: nowrap;
	}
	.dlabel.gap3 {
		margin-top: 2px;
	}
	.cab {
		position: relative;
		width: 48px;
		height: 48px;
		border-radius: 4px;
		background: linear-gradient(90deg, #fff 35%, #f8dcb4 100%);
		overflow: hidden;
	}
	.cabbars {
		position: absolute;
		left: 7px;
		top: 5px;
	}
	.cabword {
		position: absolute;
		right: 4px;
		bottom: 0;
		font: bold 20px/22px "DejaVu Sans", sans-serif;
		color: #1a9ad0;
	}
	.shortcut {
		position: absolute;
		left: 0;
		bottom: 0;
		width: 15px;
		height: 15px;
		background: #fff;
		border: 1px solid #8a8a8a;
	}

	.window {
		position: absolute;
		z-index: 2;
		left: 13px;
		top: 0;
		width: 1493px;
		height: 998px;
		box-sizing: border-box;
		display: flex;
		flex-direction: column;
		padding: 0 6px 6px;
		background: #dbe6f3;
		border: 1px solid #49525e;
		border-radius: 6px 6px 0 0;
	}
	.titlebar {
		flex: none;
		height: 29px;
		box-sizing: border-box;
		margin: 0 -6px;
		padding: 6px 9px 0 8px;
		display: flex;
		align-items: center;
		background: linear-gradient(180deg, #c3cfda 0%, #dbe8f4 100%);
	}
	.appicon {
		margin-right: 5px;
	}
	.apptitle {
		font: 12.5px "Open Sans", sans-serif;
		color: #505050;
	}
	.winbtns {
		margin-left: auto;
		display: flex;
		gap: 4px;
	}
	.wb {
		width: 28px;
		height: 16px;
		display: flex;
		align-items: center;
		justify-content: center;
		border: 1px solid #7f90a4;
		border-radius: 2px;
		background: linear-gradient(180deg, #e0e9f2, #c4d2e0);
	}
	.w-min {
		width: 9px;
		height: 3px;
		border: 1px solid #55606e;
		background: #fff;
		margin-top: 4px;
	}
	.w-max {
		width: 7px;
		height: 7px;
		border: 1px solid #55606e;
		border-top-width: 2px;
		box-shadow: inset 0 0 0 1px #fff;
	}
	.menubar {
		flex: none;
		height: 24px;
		display: flex;
		align-items: center;
		gap: 14px;
		padding-left: 6px;
		background: #f0f0f0;
	}
	.mi {
		white-space: nowrap;
	}
	.toolbar {
		flex: none;
		height: 30px;
		display: flex;
		align-items: center;
		background: #f0f0f0;
	}
	.toolbar.second {
		height: 30px;
		padding-bottom: 2px;
		box-sizing: border-box;
	}
	.grip {
		flex: none;
		width: 2px;
		height: 22px;
		border-left: 2px dotted #9a9a9a;
	}
	.arr {
		flex: none;
		width: 1px;
		height: 0;
		border: 3px solid transparent;
		border-top: 4px solid #111;
		border-bottom: 0;
		margin-top: 1px;
	}
	.arr.more {
		margin-top: 14px;
	}
	.tic {
		flex: none;
		width: 16px;
		height: 16px;
		line-height: 0;
	}
	.tlabel {
		flex: none;
		white-space: nowrap;
	}
	.fmt {
		flex: none;
		width: 16px;
		text-align: center;
		font: bold 13px "Liberation Serif", serif;
		color: #555;
	}
	.fmt.i {
		font-style: italic;
	}
	.fmt.u {
		text-decoration: underline;
	}
	.fmt.off {
		color: #ccc;
	}
	.combo,
	.spin {
		flex: none;
		box-sizing: border-box;
		height: 24px;
		display: flex;
		align-items: center;
		justify-content: space-between;
		background: #fff;
		border: 2px solid #bcbcbc;
		padding-left: 1px;
		white-space: nowrap;
		overflow: hidden;
	}
	.cbtn {
		flex: none;
		width: 16px;
		height: 20px;
		display: flex;
		align-items: center;
		justify-content: center;
		background: linear-gradient(#f4f4f4, #cfcfcf);
		border: 1px solid #555;
		box-sizing: border-box;
	}
	.cbtn i {
		border: 4px solid transparent;
		border-top: 5px solid #111;
		border-bottom: 0;
	}
	.spbtns {
		flex: none;
		width: 13px;
		display: flex;
		flex-direction: column;
		gap: 1px;
		margin-right: 4px;
	}
	.spbtns i {
		height: 9px;
		background: #e8e8f4;
		border: 1px solid #bbb;
		box-sizing: border-box;
		position: relative;
	}
	.spbtns i::after {
		content: '';
		position: absolute;
		left: 3px;
		top: 2px;
		border: 3px solid transparent;
	}
	.spbtns .up::after {
		border-bottom: 4px solid #5c5cb0;
		border-top: 0;
	}
	.spbtns .dn::after {
		border-top: 4px solid #5c5cb0;
		border-bottom: 0;
	}
	.chev {
		flex: none;
		width: 10px;
		display: flex;
		flex-direction: column;
		align-items: center;
		font: bold 13px/12px "Liberation Sans", sans-serif;
		gap: 3px;
	}

	.workspace {
		flex: 1;
		min-height: 0;
		display: flex;
		background: #5b5b7f;
	}
	.project {
		flex: none;
		width: 231px;
		margin-top: 5px;
		display: flex;
		flex-direction: column;
		background: #f0f0f0;
	}
	.panehead {
		flex: none;
		height: 26px;
		display: flex;
		align-items: center;
		gap: 1px;
		padding: 0 2px 0 5px;
		background: #b4b4be;
	}
	.panehead > span:first-child {
		font-size: 17px;
		font-weight: 700;
		color: #ececf0;
		margin-right: auto;
		line-height: 24px;
	}
	.pbtn {
		width: 24px;
		height: 25px;
		display: flex;
		align-items: center;
		justify-content: center;
		border-radius: 50%;
		background: radial-gradient(circle at 50% 30%, #b8b8ff, #8080f0);
		border: 1px solid #7070c0;
		box-sizing: border-box;
	}
	.pbtn b {
		color: #14143c;
		font: bold 16px "Liberation Sans", sans-serif;
	}
	.panebody {
		flex: 1;
		min-height: 0;
		display: flex;
		background: #fff;
	}
	.tree {
		position: relative;
		flex: none;
		width: 213px;
		margin-left: 1px;
		overflow: hidden;
	}
	.vline {
		position: absolute;
		width: 0;
		border-left: 1px dotted #777;
	}
	.row {
		position: relative;
		height: 16px;
		display: flex;
		align-items: center;
		white-space: nowrap;
	}
	.exp {
		position: relative;
		flex: none;
		z-index: 1;
		box-sizing: border-box;
		width: 9px;
		height: 9px;
		border: 1px solid #8a8a8a;
		background: linear-gradient(135deg, #fff, #dcdcdc);
	}
	.exp .h {
		position: absolute;
		left: 1px;
		top: 3px;
		width: 5px;
		height: 1px;
		background: #2a2a80;
	}
	.exp .v {
		position: absolute;
		left: 3px;
		top: 1px;
		width: 1px;
		height: 5px;
		background: #2a2a80;
	}
	.noexp {
		position: relative;
		flex: none;
		width: 9px;
		height: 1px;
	}
	.noexp::after {
		content: '';
		position: absolute;
		left: 4px;
		right: 0;
		border-top: 1px dotted #777;
	}
	.stub {
		flex: none;
		width: 6px;
		border-top: 1px dotted #777;
	}
	.ri {
		flex: none;
		width: 16px;
		height: 16px;
		display: flex;
		align-items: center;
		justify-content: center;
		margin-right: 4px;
	}
	.scr {
		display: block;
		flex: none;
		box-sizing: border-box;
		width: 14px;
		height: 13px;
		border: 2px solid #6f6ff6;
		background: linear-gradient(135deg, #fff 30%, #cfcffa);
	}
	.scr.tpl {
		border-color: #3fa044;
		background: linear-gradient(135deg, #fff 30%, #c8e4c8);
	}
	.scr.small {
		width: 13px;
		height: 13px;
		margin-right: 1px;
	}
	.rt {
		padding: 0 1px;
		line-height: 16px;
	}
	.rt.mono {
		font: 10px "Liberation Mono", monospace;
	}
	.rt.sel {
		background: #f0f0f0;
	}
	.vscroll {
		flex: none;
		width: 16px;
		margin-left: 1px;
		position: relative;
		background: #f0f0f0;
	}
	.sup,
	.sdn {
		position: absolute;
		left: 5px;
		border: 3px solid transparent;
	}
	.sup {
		top: 6px;
		border-bottom: 4px solid #555;
		border-top: 0;
	}
	.sdn {
		bottom: 7px;
		border-top: 4px solid #555;
		border-bottom: 0;
	}
	.thumb {
		position: absolute;
		left: 0;
		right: 0;
		top: 18px;
		height: 700px;
		display: flex;
		align-items: center;
		justify-content: center;
		box-sizing: border-box;
		background: linear-gradient(90deg, #f6f6f6, #c8c8c8);
		border: 1px solid #a8a8a8;
		border-radius: 2px;
	}
	.thumb span {
		width: 7px;
		height: 6px;
		border-top: 1px solid #666;
		border-bottom: 1px solid #666;
		background: linear-gradient(#666, #666) center/100% 1px no-repeat;
	}

	.editor {
		flex: 1;
		min-width: 0;
		display: flex;
		flex-direction: column;
		padding-left: 5px;
		padding-right: 2px;
	}
	.tabs {
		flex: none;
		height: 30px;
		display: flex;
		align-items: flex-end;
		gap: 6px;
		padding-left: 9px;
	}
	.tab {
		height: 22px;
		width: 74px;
		box-sizing: border-box;
		display: flex;
		align-items: center;
		padding: 0 0 2px 6px;
		background: #dcdce6;
		color: #777;
		white-space: nowrap;
		overflow: hidden;
	}
	.tab.active {
		width: 112px;
		height: 24px;
		background: #dcdcf0;
		color: #111;
		font-weight: 700;
	}
	.navbtns {
		margin-left: auto;
		align-self: flex-start;
		margin-top: 7px;
		margin-right: 2px;
		display: flex;
		gap: 3px;
	}
	.nav {
		width: 20px;
		height: 21px;
		display: flex;
		align-items: center;
		justify-content: center;
		border-radius: 50%;
		background: radial-gradient(circle at 50% 30%, #bdbdbd, #7a7a7a);
	}
	.nav .tl {
		border: 7px solid transparent;
		border-right: 9px solid #000;
		border-left: 0;
	}
	.nav .tr {
		border: 7px solid transparent;
		border-left: 9px solid #000;
		border-right: 0;
	}
	.nav.close {
		background: radial-gradient(circle at 50% 30%, #bcbcff, #7c7cf0);
	}
	.nav b {
		font: bold 15px/15px "Liberation Sans", sans-serif;
		color: #101040;
	}
	.doc {
		flex: 1;
		min-height: 0;
		border: 2px solid #8c8cdc;
		background: #5b5b7f;
		overflow: hidden;
	}
	.canvas {
		height: 352px;
		padding: 11px 0 0 7px;
		box-sizing: border-box;
		background: #bcbcbc;
		overflow: hidden;
	}
	.siemens {
		width: 81px;
		height: 21px;
		text-align: center;
		background: #0a8080;
		color: #fff;
		font: bold 17px/21px "Liberation Sans", sans-serif;
		letter-spacing: -0.3px;
	}
	.screen {
		margin: 13px 0 0 32px;
		width: 400px;
		height: 274px;
		padding: 15px 0 0 31px;
		box-sizing: border-box;
		background: #00ffc0;
	}
	.hmi {
		width: 240px;
		height: 239px;
		background: #bcbcbc;
		display: flex;
		flex-direction: column;
	}
	.hrow {
		display: flex;
		gap: 2px;
		height: 38px;
	}
	.hbtn {
		width: 46px;
		display: flex;
		align-items: center;
		justify-content: center;
		color: #666;
		font-size: 12px;
		border-right: 1px solid #666;
		background: #bcbcbc radial-gradient(#333 0.6px, transparent 0.9px) 0 4px / 12px 12px;
	}
	.hblack {
		height: 18px;
		margin-top: 1px;
		background: #000;
		color: #fff;
		padding-left: 98px;
		line-height: 18px;
		font-size: 13px;
	}
	.codes {
		padding: 4px 0 2px 4px;
		display: flex;
		flex-direction: column;
		gap: 5px;
		background: radial-gradient(#333 0.6px, transparent 0.9px) 0 0 / 9px 9px;
	}
	.code {
		position: relative;
		box-sizing: border-box;
		width: 100px;
		height: 30px;
		padding-top: 3px;
		display: flex;
		align-items: center;
		justify-content: center;
		font: 18.5px "Liberation Mono", monospace;
		color: #333;
		background: #bcbcbc;
		border: 1px solid #111;
		border-width: 1px 2px 3px 1px;
	}
	.code.picked {
		height: 28px;
		padding-top: 2px;
	}
	.hd {
		position: absolute;
		box-sizing: border-box;
		width: 6px;
		height: 6px;
		background: #7cc4ea;
		border: 1px solid #1c4c7c;
	}
	.msg {
		height: 16px;
		line-height: 16px;
		font-size: 12.5px;
		background: #fff;
		border-bottom: 1px dotted #333;
		white-space: nowrap;
		overflow: hidden;
		color: #222;
	}
	.msg.last {
		border: 0;
	}
	.dots {
		letter-spacing: 4px;
		margin-left: 2px;
	}
	.hbottom {
		margin-top: 6px;
		display: flex;
		gap: 2px;
		height: 39px;
	}
	.bbtn {
		box-sizing: border-box;
		width: 63px;
		display: flex;
		align-items: center;
		justify-content: center;
		border: 1px solid #111;
		border-width: 1px 1px 2px 1px;
		background: #bcbcbc;
	}
	.bbtn.long {
		flex: 1;
		justify-content: flex-start;
		padding-left: 11px;
		font-size: 12.5px;
	}

	.dialog {
		position: absolute;
		z-index: 3;
		left: 436px;
		top: 149px;
		width: 1168px;
		height: 920px;
		box-sizing: border-box;
		display: flex;
		flex-direction: column;
		background: #e8e8e8;
		border: 1px solid #000;
		box-shadow: inset 1px 1px 0 #fff;
		padding: 1px 6px 0 1px;
	}
	.dhead {
		flex: none;
		height: 31px;
		box-sizing: border-box;
		margin-right: -6px;
		display: flex;
		align-items: center;
		justify-content: space-between;
		padding: 0 3px 3px 6px;
		background: #b6b6c0;
		border-bottom: 1px solid #a0a0a0;
	}
	.dtitle {
		font-family: "Liberation Serif", "Noto Sans CJK SC", serif;
		font-size: 19px;
		font-weight: 700;
		line-height: 24px;
		color: #efefef;
		text-shadow: 1px 1px 0 #8a8a94;
	}
	.dclose {
		width: 24px;
		height: 24px;
		display: flex;
		align-items: center;
		justify-content: center;
		border-radius: 50%;
		background: radial-gradient(circle at 50% 30%, #c0c0ff, #7c7cf0);
		border: 1px solid #6a6ac0;
		box-sizing: border-box;
	}
	.dbody {
		flex: 1;
		min-height: 0;
		display: flex;
		gap: 5px;
		padding: 2px 0 0 5px;
		background: #e8e8e8;
	}
	.evtree {
		flex: none;
		width: 191px;
		box-sizing: border-box;
		background: #fff;
		border: 1px solid #b0b0b0;
	}
	.ev {
		height: 16px;
		display: flex;
		align-items: center;
		padding-left: 5px;
	}
	.ev.lvl1 {
		padding-left: 24px;
	}
	.mark {
		flex: none;
		width: 14px;
		height: 16px;
		margin-right: 2px;
		display: flex;
		align-items: center;
		justify-content: flex-start;
	}
	.sq {
		display: block;
		width: 6px;
		height: 6px;
		margin-left: 2px;
		background: #00009c;
	}
	.tri {
		display: block;
		border: 7px solid transparent;
		border-left: 8px solid #00009c;
		border-right: 0;
	}
	.evt {
		padding: 0 2px;
		line-height: 16px;
	}
	.evt.bold {
		font-weight: 700;
	}
	.evt.on {
		background: #3399ff;
		color: #fff;
		padding: 0 3px;
	}
	.fnpanel {
		flex: 1;
		min-width: 0;
		border: 1px solid #c0c0c0;
		padding: 0 9px 0 10px;
		box-shadow: 6px 0 0 #f2f2f2;
	}
	.fnbar {
		height: 24px;
		display: flex;
		align-items: flex-end;
		padding-bottom: 2px;
		box-sizing: border-box;
		border-bottom: 1px solid #555;
	}
	.fngroup {
		display: flex;
	}
	.fngroup.two {
		margin-left: 8px;
		gap: 2px;
	}
	.fb {
		box-sizing: border-box;
		width: 18px;
		height: 18px;
		display: flex;
		align-items: center;
		justify-content: center;
		border: 1px solid #111;
		background: #ececec;
	}
	.fntitle {
		margin-left: auto;
		margin-right: 3px;
		font-size: 20px;
		font-weight: 500;
		line-height: 24px;
		color: #e8a020;
		text-shadow: 1px 1px 1px #a89880;
	}
	.fntable {
		margin-top: 11px;
	}
	.trow {
		display: grid;
		grid-template-columns: 38px 449px 450px;
		height: 20px;
		box-sizing: border-box;
		border-bottom: 1px solid #d2d2d2;
		background: #f3f3f3;
	}
	.trow > * {
		display: flex;
		align-items: center;
		min-width: 0;
	}
	.trow.head {
		background: #fdf9ef;
	}
	.num {
		padding-left: 2px;
		background: #fff;
		border-right: 1px solid #e8e8e8;
		border-left: 1px solid #d2d2d2;
		font: bold 11.5px "Noto Sans", sans-serif;
	}
	.trow.head .num {
		background: #fdf9ef;
	}
	.trow.blank .num {
		background: #f3f3f3;
	}
	.fname {
		gap: 4px;
		padding-left: 2px;
		border-left: 2px solid #d2d2d2;
	}
	.fname b {
		font: bold 11.5px "Noto Sans", "Noto Sans CJK SC", sans-serif;
	}
	.fname.none {
		padding-left: 14px;
	}
	.fname.none b {
		font-size: 12.5px;
		letter-spacing: 1px;
	}
	.fx {
		flex: none;
	}
	.trow.selected .fname,
	.trow.selected .fval {
		background: #cbc6ee;
		border-top: 3px solid #9c9cac;
		border-bottom: 3px solid #9c9cac;
		margin-bottom: -1px;
	}
	.trow.selected .fname {
		border-left: 3px solid #8c8c9c;
		padding-left: 1px;
	}
	.fval {
		justify-content: flex-end;
	}
	.dd {
		width: 15px;
		height: 16px;
		margin: -2px 2px -2px 0;
		display: flex;
		align-items: center;
		justify-content: center;
		background: #d4d0f2;
		border-right: 1px solid #333;
		border-bottom: 1px solid #333;
	}
	.dd i {
		border: 4px solid transparent;
		border-top: 4px solid #111;
		border-bottom: 0;
	}
	.plabel {
		padding-left: 25px;
		color: #8c8c8c;
		border-left: 2px solid #d2d2d2;
	}
	.trow.blank > span:nth-child(2) {
		border-left: 2px solid #d2d2d2;
	}
	.pval {
		padding-left: 1px;
		border-left: 1px solid #fff;
		font: 11px "Noto Sans", "Noto Sans CJK SC", sans-serif;
	}
	.trow.blank .pval {
		border-left: 2px solid #dcdcdc;
	}
	.pval.strong {
		font-weight: 700;
		font-size: 11.5px;
		letter-spacing: 0.6px;
	}

	.imebar {
		position: absolute;
		z-index: 4;
		left: 1735px;
		top: 1008px;
		width: 185px;
		height: 22px;
		display: flex;
		align-items: center;
		gap: 7px;
		padding-left: 12px;
		box-sizing: border-box;
		background: #fff;
	}
	.imelogo {
		position: absolute;
		left: -22px;
		top: -3px;
	}
	.imez {
		color: #1a78c8;
		font-size: 15px;
		font-weight: 700;
		line-height: 16px;
	}
	.imep {
		color: #1a78c8;
		font: bold 14px/14px "Liberation Sans", sans-serif;
		width: 12px;
	}

	.taskbar {
		position: absolute;
		z-index: 5;
		left: 0;
		right: 0;
		top: 1040px;
		height: 40px;
		box-sizing: border-box;
		display: flex;
		align-items: center;
		padding-left: 8px;
		border-top: 1px solid #3c4a58;
		background: linear-gradient(90deg, #7b92ad 0, #a8c0dc 11%, #a8c0dc 83%, #8095ac 85%, #8095ac 100%);
	}
	.orb {
		flex: none;
		width: 38px;
		height: 38px;
		margin-right: 27px;
	}
	.pin {
		flex: none;
		display: flex;
		align-items: center;
		justify-content: center;
	}
	.baidu {
		width: 32px;
		height: 32px;
		background: #3fa8ee;
		margin-right: 17px;
	}
	.hmiapp {
		width: 32px;
		height: 32px;
		margin-left: 17px;
		margin-right: 17px;
	}
	.tbtn {
		flex: none;
		box-sizing: border-box;
		width: 58px;
		height: 39px;
		margin-right: 4px;
		display: flex;
		align-items: center;
		justify-content: center;
		border: 1px solid #7b8fa6;
		border-radius: 3px;
		background: linear-gradient(180deg, #c6d8ec, #a8c0dc);
		box-shadow: inset 0 0 0 1px rgba(255, 255, 255, 0.3);
	}
	.tbtn.ie {
		margin-right: 0;
	}
	.tbtn.vm {
		width: 54px;
		margin-right: 2px;
	}
	.sliver {
		flex: none;
		width: 4px;
		height: 39px;
		margin-right: 2px;
		border: 1px solid #7b8fa6;
		border-left: 0;
		box-sizing: border-box;
		background: #bcd0e6;
	}
	.wpsbox {
		width: 32px;
		height: 32px;
		display: flex;
		align-items: center;
		justify-content: center;
		border-radius: 6px;
		background: #2c9cf0;
	}
	.ccfl {
		position: relative;
		width: 32px;
		height: 32px;
		background: #2a2ac8;
		color: #fff;
		font: bold 16px/17px "Liberation Sans", sans-serif;
		overflow: hidden;
		white-space: nowrap;
	}
	.ccfl > span {
		display: block;
		margin-left: -6px;
	}
	.ccfl em {
		position: absolute;
		right: 1px;
		bottom: 0;
		font: bold 12px/14px "Liberation Sans", sans-serif;
		color: #b0b0e8;
	}
	.watermark {
		position: absolute;
		left: 1580px;
		width: 330px;
		top: 14px;
		font: 17px "Liberation Serif", serif;
		letter-spacing: 1.5px;
		color: #fff;
		opacity: 0.13;
		white-space: nowrap;
		overflow: hidden;
	}
	.tray {
		margin-left: auto;
		display: flex;
		align-items: center;
		height: 100%;
	}
	.t-help {
		margin-left: 7px;
	}
	.trayups {
		margin-left: 9px;
		display: flex;
		flex-direction: column;
		align-items: center;
		gap: 4px;
		width: 10px;
	}
	.rest {
		width: 8px;
		height: 5px;
		border: 1px solid #fff;
	}
	.dnw {
		border: 3px solid transparent;
		border-top: 4px solid #fff;
		border-bottom: 0;
	}
	.upw {
		margin-left: 10px;
		border: 4px solid transparent;
		border-bottom: 4px solid #dfe6ee;
		border-top: 0;
	}
	.t-flag {
		margin-left: 14px;
	}
	.t-plug {
		margin-left: 7px;
	}
	.t-net {
		margin-left: 11px;
	}
	.t-vol {
		margin-left: 8px;
	}
	.clock {
		width: 76px;
		margin-left: 7px;
		display: flex;
		flex-direction: column;
		align-items: center;
		font: 12.5px/18px "Open Sans", sans-serif;
		color: #fff;
		text-shadow: 0 0 2px #444;
	}
	.showdesk {
		width: 13px;
		height: 38px;
		margin-left: 2px;
		box-sizing: border-box;
		border: 1px solid #55606c;
		border-radius: 1px;
		background: linear-gradient(180deg, #8a98a8, #6c7a8a);
	}
</style>
